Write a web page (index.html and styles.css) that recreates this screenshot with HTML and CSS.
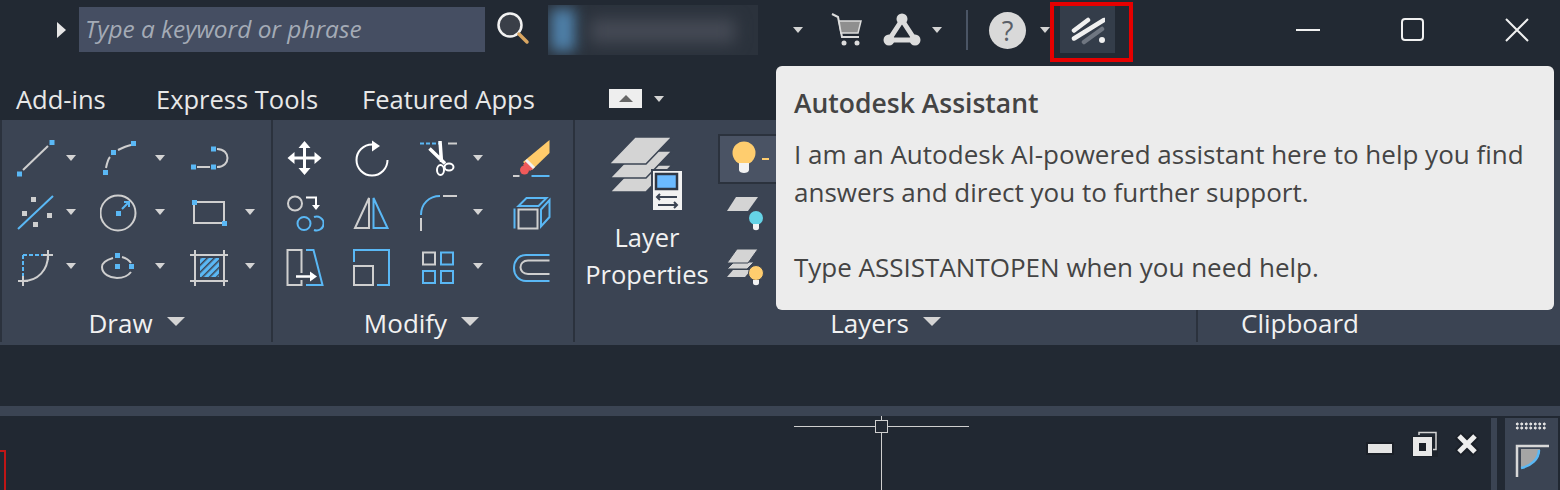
FILE: index.html
```html
<!DOCTYPE html>
<html lang="en">
<head>
    <meta charset="UTF-8">
    <title>Autodesk Assistant</title>
    <link rel="stylesheet" href="styles.css">
</head>
<body>
    <div class="titlebar">
        <svg class="expand" width="10" height="16" viewBox="0 0 10 16"><path d="M0 0l9 8-9 8z" fill="#e6e6e6"/></svg>
        <div class="search">Type a keyword or phrase</div>
        <svg class="search-icon" width="34" height="34" viewBox="0 0 34 34"><circle cx="13" cy="13" r="11.500" fill="#3a3f48" stroke="#f2f2f2" stroke-width="2.500"/><path d="M22 22l8 8" stroke="#d9a662" stroke-width="3.500" stroke-linecap="round"/></svg>
        <div class="account"><span class="account-blob"></span><span class="account-name"></span></div>
        <span class="caret caret-account"></span>
        <svg class="cart" width="32" height="34" viewBox="0 0 32 34"><path d="M1 1l6 3 4 20h17" fill="none" stroke="#dcdcdc" stroke-width="2"/><path d="M8 8h22l-3 12H10z" fill="#8f8f8f" stroke="#dcdcdc" stroke-width="1.500"/><circle cx="13" cy="30" r="2.500" fill="#dcdcdc"/><circle cx="26" cy="30" r="2.500" fill="#dcdcdc"/></svg>
        <svg class="a360" width="38" height="34" viewBox="0 0 38 34"><path d="M19 7L6 27h26z" fill="none" stroke="#dcdcdc" stroke-width="5"/><circle cx="19" cy="6" r="5.500" fill="#dcdcdc"/><circle cx="6" cy="27" r="5.500" fill="#dcdcdc"/><circle cx="32" cy="27" r="5.500" fill="#dcdcdc"/></svg>
        <span class="caret caret-a360"></span>
        <span class="bar-sep"></span>
        <div class="help">?</div>
        <span class="caret caret-help"></span>
        <div class="assistant-box">
            <div class="assistant-btn">
                <svg width="34" height="30" viewBox="0 0 34 30"><path d="M3 15.500L17 5M3 23.500L33 5" stroke="#f0f0f0" stroke-width="4.500" stroke-linecap="round" fill="none"/><path d="M13 27l18-13" stroke="#6f7681" stroke-width="4.500" stroke-linecap="round"/><circle cx="31" cy="25" r="3" fill="#f0f0f0"/></svg>
            </div>
        </div>
        <div class="window-controls">
            <svg width="26" height="26" viewBox="0 0 26 26"><path d="M1 13h24" stroke="#f0f0f0" stroke-width="2"/></svg>
            <svg width="26" height="26" viewBox="0 0 26 26"><rect x="2" y="2" width="21" height="21" rx="3" fill="none" stroke="#f0f0f0" stroke-width="2"/></svg>
            <svg width="26" height="26" viewBox="0 0 26 26"><path d="M1 2l22 22M23 2L1 24" stroke="#f0f0f0" stroke-width="2"/></svg>
        </div>
    </div>

    <div class="tabs">
        <span class="tab">Add-ins</span>
        <span class="tab">Express Tools</span>
        <span class="tab">Featured Apps</span>
        <span class="tab-toggle"><i></i></span>
        <span class="caret"></span>
    </div>

    <div class="ribbon">
        <section class="panel panel-draw">
            <div class="tools tools-draw">
                <div class="tool">
                    <svg class="ico" viewBox="0 0 40 40"><path d="M7 32L32 8" class="g"/><rect x="33.500" y="2" width="5" height="5" class="bf"/><rect x="1" y="33.500" width="5" height="5" class="bf"/></svg>
                    <span class="caret caret-near"></span>
                </div>
                <div class="tool">
                    <svg class="ico" viewBox="0 0 40 40"><path d="M6 30C7 25 8 21 10 19M18 12C22 10 26 8 31 7" class="g"/><rect x="3" y="32" width="5" height="5" class="bf"/><rect x="11" y="12" width="5" height="5" class="bf"/><rect x="31" y="3" width="5" height="5" class="bf"/></svg>
                    <span class="caret"></span>
                </div>
                <div class="tool">
                    <svg class="ico" viewBox="0 0 40 40"><path d="M7 29h13M27 11c14 0 14 18 0 18" class="g"/><rect x="1" y="26.500" width="5" height="5" class="bf"/><rect x="21" y="26.500" width="5" height="5" class="bf"/><rect x="21" y="8.500" width="5" height="5" class="bf"/></svg>
                </div>
                <div class="tool">
                    <svg class="ico" viewBox="0 0 40 40"><path d="M2 37L37 4" class="b"/><rect x="15" y="5" width="5" height="5" class="gf"/><rect x="6" y="19" width="5" height="5" class="gf"/><rect x="31" y="21" width="5" height="5" class="gf"/><rect x="17" y="30" width="5" height="5" class="gf"/></svg>
                    <span class="caret caret-near"></span>
                </div>
                <div class="tool">
                    <svg class="ico" viewBox="0 0 40 40"><circle cx="18" cy="21" r="17.500" class="g"/><rect x="16" y="19" width="5" height="5" class="bf"/><path d="M22 17l6-6M24 10h5v5" class="b"/></svg>
                    <span class="caret"></span>
                </div>
                <div class="tool">
                    <svg class="ico" viewBox="0 0 40 40"><path d="M4 10h30v21H4z" class="g"/><rect x="2" y="8" width="5" height="5" class="bf"/><rect x="32" y="29" width="5" height="5" class="bf"/></svg>
                    <span class="caret"></span>
                </div>
                <div class="tool">
                    <svg class="ico" viewBox="0 0 40 40"><path d="M7 9h25M7 9v26" class="b dash"/><path d="M32 9C32 24 22 35 7 35" class="g"/><path d="M32 4v10M27 9h10M7 30v10M2 35h10" class="g"/></svg>
                    <span class="caret caret-near"></span>
                </div>
                <div class="tool">
                    <svg class="ico" viewBox="0 0 40 40"><path d="M13 12C6 14 2 17 2 21c0 7 8 11 15 11 6 0 11-2 14-6M22 11c4 1 7 3 9 6" class="g"/><rect x="15" y="7" width="5" height="5" class="bf"/><rect x="15" y="18" width="5" height="5" class="bf"/><rect x="29" y="18" width="5" height="5" class="bf"/></svg>
                    <span class="caret"></span>
                </div>
                <div class="tool">
                    <svg class="ico" viewBox="0 0 40 40"><defs><pattern id="hatch" width="5" height="5" patternUnits="userSpaceOnUse" patternTransform="rotate(45)"><rect width="5" height="5" fill="#5ab8f5"/><rect width="1.500" height="5" fill="#3b4453"/></pattern></defs><rect x="10" y="12" width="19" height="19" fill="url(#hatch)"/><path d="M5 4v36M34 4v36M0 9h38M0 35h38" class="g"/></svg>
                    <span class="caret"></span>
                </div>
            </div>
            <div class="panel-label"><span>Draw</span><span class="caret caret-big"></span></div>
        </section>

        <section class="panel panel-modify">
            <div class="tools tools-modify">
                <div class="tool">
                    <svg class="ico" viewBox="0 0 40 40"><path d="M20.500 3l6 7h-4.500v8.500h8.500V14l7 6-7 6v-4.500H22V30h4.500l-6 7-6-7H19v-8.500h-8.500V26l-7-6 7-6v4.500H19V10h-4.500z" fill="#fff"/></svg>
                </div>
                <div class="tool">
                    <svg class="ico" viewBox="0 0 40 40"><path d="M20 6.500A15.500 15.500 0 1 0 35.500 22" fill="none" stroke="#fff" stroke-width="2"/><path d="M20 2.500L28 8l-8 5.500z" fill="#fff"/></svg>
                </div>
                <div class="tool">
                    <svg class="ico" viewBox="0 0 40 40"><path d="M2 5.500h20" class="b dash"/><path d="M30 5.500h9" class="g"/><path d="M22 3l1.500 21M11.500 10.500L27 25.500" stroke="#fff" stroke-width="3.500" fill="none"/><ellipse cx="22.500" cy="32" rx="3.500" ry="5" fill="none" stroke="#fff" stroke-width="2"/><ellipse cx="31" cy="29" rx="4.500" ry="3.500" fill="none" stroke="#fff" stroke-width="2"/></svg>
                    <span class="caret"></span>
                </div>
                <div class="tool">
                    <svg class="ico" viewBox="0 0 40 40"><path d="M36.500 2v13L19 32l-9-8z" fill="#ffcb6b"/><circle cx="11.500" cy="32" r="4.500" fill="#f05a5a"/><path d="M10 27l3-4 8 7-4 3z" fill="#f05a5a"/><path d="M13 22l8 8" stroke="#f2f2f2" stroke-width="3"/><path d="M0 38h6.500" class="g"/><path d="M18.500 38h18" class="b"/></svg>
                </div>
                <div class="tool">
                    <svg class="ico" viewBox="0 0 40 40"><circle cx="11" cy="11.500" r="7" class="g"/><path d="M22 5.500h10V13" fill="none" stroke="#fff" stroke-width="2"/><path d="M28 13h8l-4 5z" fill="#fff"/><circle cx="20" cy="31.500" r="6.500" class="b"/><path d="M30 25a7 7 0 1 1 0 13" class="b"/></svg>
                </div>
                <div class="tool">
                    <svg class="ico" viewBox="0 0 40 40"><path d="M17 6v30H3z" class="g"/><path d="M21.500 6v30h14z" class="b"/></svg>
                </div>
                <div class="tool">
                    <svg class="ico" viewBox="0 0 40 40"><path d="M3 23C3 12 11 4 22 4" class="b"/><path d="M3 26v13" class="g"/><path d="M25 4h14" class="g"/></svg>
                    <span class="caret"></span>
                </div>
                <div class="tool">
                    <svg class="ico" viewBox="0 0 40 40"><rect x="5.500" y="17.500" width="19" height="19" class="g"/><path d="M5.500 14l8-8h20l-8 8zM28 17.500L36.500 8v17L28 34.500zM1.500 16.500v20" class="b"/></svg>
                </div>
                <div class="tool">
                    <svg class="ico" viewBox="0 0 40 40"><path d="M17.500 27V4h-14v35h14v-5" class="g"/><path d="M22 4h7.500L38.500 39H22" class="b"/><path d="M12 30.500h16" fill="none" stroke="#fff" stroke-width="2.500"/><path d="M26 25.500l7 5-7 5z" fill="#fff"/></svg>
                </div>
                <div class="tool">
                    <svg class="ico" viewBox="0 0 40 40"><path d="M2 16V4h35v35H25" class="b"/><rect x="2" y="20" width="19" height="19" class="g"/></svg>
                </div>
                <div class="tool">
                    <svg class="ico" viewBox="0 0 40 40"><rect x="5" y="6.500" width="12" height="12" class="g"/><rect x="23" y="6.500" width="12" height="12" class="b"/><rect x="5" y="25" width="12" height="12" class="b"/><rect x="23" y="25" width="12" height="12" class="b"/></svg>
                    <span class="caret"></span>
                </div>
                <div class="tool">
                    <svg class="ico" viewBox="0 0 40 40"><path d="M36.500 9H13C-3 9-3 35 13 35h23.500" class="b"/><path d="M36.500 14.500H15c-10 0-10 13.500 0 13.500h21.500" class="g"/></svg>
                </div>
            </div>
            <div class="panel-label"><span>Modify</span><span class="caret caret-big"></span></div>
        </section>

        <section class="panel panel-layers">
            <div class="layers-body">
                <div class="layer-props">
                    <svg class="layer-stack" width="76" height="76" viewBox="0 0 76 76">
                        <path d="M1 55l26-27h36L37 55z" fill="#d4d4d4" stroke="#3b4453" stroke-width="1.500"/>
                        <path d="M1 41l26-27h36L37 41z" fill="#d4d4d4" stroke="#3b4453" stroke-width="1.500"/>
                        <path d="M0 27L26 0h37L37 27z" fill="#d4d4d4" stroke="#3b4453" stroke-width="1.500"/>
                        <rect x="43" y="33" width="31" height="41" fill="#f2f2f2" stroke="#3b4453" stroke-width="2"/>
                        <rect x="47" y="37" width="21" height="15" fill="#6bbaff" stroke="#2f3744" stroke-width="2.500"/>
                        <path d="M49 60h19M68 68H49M51 57l-3 3 3 3M65 65l3 3-3 3" stroke="#3b4453" stroke-width="2" fill="none"/>
                    </svg>
                    <div class="layer-props-label">Layer<br>Properties</div>
                </div>
                <div class="layer-tools">
                    <div class="layer-current">
                        <svg width="30" height="44" viewBox="0 0 30 44"><circle cx="13" cy="16" r="11.500" fill="#ffcd6e"/><path d="M8 26h10v7c0 4-10 4-10 0z" fill="#f2f2f2"/></svg>
                        <span class="layer-dash"></span>
                    </div>
                    <svg class="layer-small" width="40" height="40" viewBox="0 0 40 40"><path d="M1 15l9-14h22l-10 14z" fill="#d4d4d4"/><circle cx="30" cy="22" r="7" fill="#65d3e6"/><path d="M27 28h6v4c0 3-6 3-6 0z" fill="#f2f2f2"/></svg>
                    <svg class="layer-small" width="40" height="40" viewBox="0 0 40 40"><path d="M1 29l6-7h18l-6 7z" fill="#d4d4d4"/><path d="M1 21l7-7h20l-7 7z" fill="#d4d4d4" stroke="#3b4453"/><path d="M1 15L11 1h21L22 15z" fill="#d4d4d4" stroke="#3b4453"/><circle cx="30" cy="25" r="7.500" fill="#ffcd6e" stroke="#3b4453"/><path d="M27 32h6v3c0 3-6 3-6 0z" fill="#f2f2f2"/></svg>
                </div>
            </div>
            <div class="panel-label"><span>Layers</span><span class="caret caret-big"></span></div>
        </section>

        <section class="panel panel-clipboard">
            <div class="panel-label"><span>Clipboard</span></div>
        </section>
    </div>

    <div class="ribbon-gap"></div>

    <div class="viewport">
        <span class="viewport-edge"></span>
        <div class="crosshair"><span class="pick"></span></div>
        <div class="viewport-controls">
            <span class="vc-min"></span>
            <svg class="vc-restore" width="26" height="26" viewBox="0 0 26 26"><path d="M0 5h26v21H0z" fill="#1a1f27" opacity="0.600"/><path d="M7 4V1.500h17v17h-3" fill="none" stroke="#d4d4d4" stroke-width="1.500"/><rect x="1" y="6" width="19" height="19" fill="#e8e8e8"/><rect x="7" y="12" width="7" height="8" fill="#1a1f27"/></svg>
            <svg class="vc-close" width="26" height="26" viewBox="0 0 26 26"><path d="M4 4l18 18M22 4L4 22" stroke="#1a1f27" stroke-width="9"/><path d="M5 5l16 16M21 5L5 21" stroke="#eee" stroke-width="5"/></svg>
        </div>
        <div class="side-palette">
            <span class="palette-grip"></span>
            <svg width="34" height="34" viewBox="0 0 34 34"><path d="M2 33V2h32" fill="none" stroke="#d8d8d8" stroke-width="2.500"/><path d="M6 5h19c0 10-8 17-19 19z" fill="#a5a5a5"/><path d="M24 6C24 15 16 22 6 24" fill="none" stroke="#5ab8f5" stroke-width="2.500"/></svg>
        </div>
    </div>

    <div class="tooltip">
        <h3>Autodesk Assistant</h3>
        <p>I am an Autodesk AI-powered assistant here to help you find answers and direct you to further support.</p>
        <p>Type ASSISTANTOPEN when you need help.</p>
    </div>
</body>
</html>
```
FILE: styles.css
```css
* {
    padding: 0;
    margin: 0;
    box-sizing: border-box;
}

:root {
    --bg-dark: #222933;
    --bg-panel: #3b4453;
    --text: #f1f1f1;
    --caret: #d4d4d4;
    --blue: #5ab8f5;
    --grey: #cfcfcf;
}

html, body {
    width: 1560px;
    height: 490px;
    overflow: hidden;
}

body {
    position: relative;
    background-color: var(--bg-dark);
    color: var(--text);
    font-family: "Open Sans", "Noto Sans", sans-serif;
}

.caret {
    display: inline-block;
    flex: none;
    width: 0;
    height: 0;
    border-left: 5.5px solid transparent;
    border-right: 5.5px solid transparent;
    border-top: 6px solid var(--caret);
}

.caret-big {
    border-left-width: 9px;
    border-right-width: 9px;
    border-top-width: 9px;
    margin-left: 14px;
    margin-top: -4px;
}

/* title bar */
.titlebar {
    display: flex;
    align-items: center;
    height: 60px;
    padding-left: 57px;
}

.expand {
    margin-right: 12px;
}

.search {
    width: 406px;
    height: 45px;
    margin-top: -1px;
    padding-left: 6px;
    line-height: 43px;
    background-color: #454e62;
    color: #a4abb6;
    font-size: 24.4px;
    font-style: italic;
    white-space: nowrap;
}

.search-icon {
    margin-left: 12px;
    margin-top: -2px;
}

.account {
    position: relative;
    width: 210px;
    height: 50px;
    margin-left: 17px;
    overflow: hidden;
    background-color: #2b323c;
}

.account-blob {
    position: absolute;
    left: 3px;
    top: 4px;
    width: 24px;
    height: 42px;
    background-color: #4f81aa;
    filter: blur(7px);
}

.account-name {
    position: absolute;
    left: 42px;
    top: 14px;
    width: 145px;
    height: 24px;
    background-color: #454a55;
    filter: blur(8px);
}

.caret-account {
    margin-left: 35px;
}

.cart {
    margin-left: 28px;
}

.a360 {
    margin-left: 20px;
}

.caret-a360 {
    margin-left: 11px;
}

.bar-sep {
    width: 2px;
    height: 40px;
    margin-left: 24px;
    background-color: #4b5565;
}

.help {
    width: 37px;
    height: 37px;
    margin-left: 21px;
    border-radius: 50%;
    background-color: #d9d9d9;
    color: #5a5f68;
    font-size: 27px;
    line-height: 37px;
    text-align: center;
}

.caret-help {
    margin-left: 14px;
}

.assistant-box {
    width: 83px;
    height: 60px;
    margin-top: 4px;
    padding-left: 6px;
    border: 4px solid #e60000;
}

.assistant-btn {
    display: flex;
    align-items: center;
    justify-content: center;
    width: 55px;
    height: 47px;
    background-color: #343d4a;
}

.window-controls {
    display: flex;
    gap: 79px;
    margin-left: 162px;
}

/* ribbon tabs */
.tabs {
    display: grid;
    grid-template-columns: 140px 206px 247px 45px 11px;
    align-items: center;
    height: 60px;
    padding: 17px 0 0 16px;
    font-size: 25.5px;
    color: #e8e8e8;
}

.tab-toggle {
    display: flex;
    align-items: center;
    justify-content: center;
    width: 33px;
    height: 19px;
    background-color: #eeeeee;
}

.tab-toggle i {
    border-left: 7px solid transparent;
    border-right: 7px solid transparent;
    border-bottom: 7px solid #666;
}

/* ribbon panels */
.ribbon {
    display: flex;
    height: 225px;
    background-color: var(--bg-panel);
}

.panel {
    position: relative;
    display: flex;
    flex-direction: column;
    height: 222px;
    border-left: 2px solid #2b323d;
}

.panel-draw {
    width: 271px;
}

.panel-modify {
    width: 302px;
}

.panel-layers {
    width: 623px;
}

.panel-clipboard {
    flex: 1;
}

.tools {
    display: grid;
    grid-auto-rows: 54px;
    padding-top: 11px;
    height: 184px;
}

.tools-draw {
    grid-template-columns: 84px 90px 90px;
    padding-left: 14px;
}

.tools-modify {
    grid-template-columns: 68px 66px 95px 60px;
    padding-left: 11px;
}

.tool {
    display: flex;
    align-items: center;
}

.ico {
    width: 40px;
    height: 40px;
    flex: none;
    fill: none;
}

.tool .caret {
    margin-left: 15px;
}

.tool .caret-near {
    margin-left: 10px;
}

.g {
    fill: none;
    stroke: var(--grey);
    stroke-width: 2;
}

.b {
    fill: none;
    stroke: var(--blue);
    stroke-width: 2;
}

.dash {
    stroke-dasharray: 4 2;
}

.bf {
    fill: var(--blue);
}

.gf {
    fill: var(--grey);
}

.panel-label {
    display: flex;
    align-items: center;
    justify-content: center;
    margin-top: auto;
    height: 38px;
    font-size: 26px;
    color: #f1f1f1;
}

.panel-modify .panel-label {
    padding-right: 3px;
}

/* layers panel */
.layers-body {
    display: flex;
    height: 184px;
    padding: 14px 0 0 2px;
}

.layer-props {
    width: 140px;
    text-align: center;
}

.layer-stack {
    display: block;
    margin: 3px auto 0;
}

.layer-props-label {
    margin-top: 6px;
    font-size: 25.5px;
    line-height: 37px;
}

.layer-tools {
    display: flex;
    flex-direction: column;
    align-items: flex-start;
    margin-left: 1px;
}

.layer-current {
    display: flex;
    align-items: center;
    width: 70px;
    height: 50px;
    padding-left: 11px;
    border: 2px solid #2b323d;
    background-color: #4a5364;
}

.layer-dash {
    width: 7px;
    height: 2px;
    margin-left: 1px;
    background-color: #ffcd6e;
}

.layer-small {
    margin: 12px 0 0 8px;
}

.panel-clipboard .panel-label {
    margin-right: 158px;
}

.ribbon-gap {
    height: 61px;
}

/* model space */
.viewport {
    position: relative;
    height: 84px;
    border-top: 10px solid var(--bg-panel);
    background-color: #212832;
}

.viewport-edge {
    position: absolute;
    left: 0;
    top: 34px;
    width: 6px;
    height: 40px;
    border-top: 2px solid #c01616;
    border-right: 2px solid #c01616;
}

.crosshair {
    position: absolute;
    left: 794px;
    top: 10px;
    width: 175px;
    height: 1px;
    background-color: #cfcfcf;
}

.crosshair::after {
    content: "";
    position: absolute;
    left: 87px;
    top: -10px;
    width: 1px;
    height: 74px;
    background-color: #cfcfcf;
}

.pick {
    position: absolute;
    left: 81px;
    top: -6px;
    z-index: 1;
    width: 13px;
    height: 13px;
    border: 1px solid #cfcfcf;
    background-color: #212832;
}

.viewport-controls {
    position: absolute;
    left: 1368px;
    top: 15px;
    display: flex;
    align-items: flex-start;
}

.vc-min {
    width: 24px;
    height: 9px;
    margin-top: 13px;
    background-color: #e4e4e4;
    box-shadow: 0 0 0 2px #1a1f27;
}

.vc-restore {
    margin-left: 20px;
}

.vc-close {
    margin-left: 16px;
}

.side-palette {
    position: absolute;
    right: 2px;
    top: 2px;
    bottom: 0;
    width: 53px;
    padding: 4px 0 0 10px;
    background-color: var(--bg-panel);
    box-shadow: -8px 0 0 var(--bg-dark), -14px 0 0 var(--bg-panel);
}

.palette-grip {
    display: block;
    width: 32px;
    height: 8px;
    margin-bottom: 14px;
    background-image: radial-gradient(circle, #e0e0e0 1.4px, transparent 1.7px);
    background-size: 4.5px 4px;
}

/* tooltip */
.tooltip {
    position: absolute;
    left: 776px;
    top: 66px;
    width: 778px;
    height: 244px;
    padding: 21px 18px;
    border-radius: 6px;
    background-color: #ececec;
    color: #444;
    font-size: 26px;
    line-height: 37.5px;
}

.tooltip h3 {
    font-size: 26.5px;
    font-weight: 600;
    line-height: 32px;
    margin-bottom: 17px;
}

.tooltip p {
    margin-bottom: 37.5px;
}
```
